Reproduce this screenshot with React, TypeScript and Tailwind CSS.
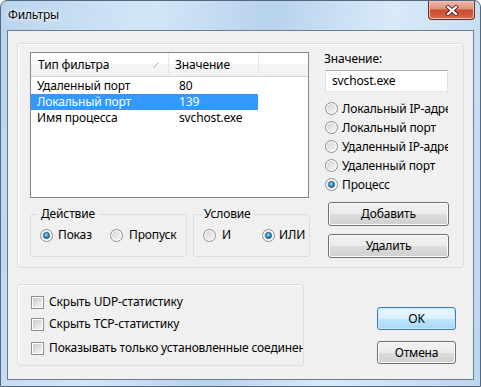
import React from 'react';

const font = { fontFamily: '"Noto Sans", "Open Sans", sans-serif' };

const Radio = ({ checked }: { checked?: boolean }) => (
  <span className="flex h-[13px] w-[13px] shrink-0 items-center justify-center rounded-full border border-[#8e8f8f] bg-[linear-gradient(135deg,#d4d4d4,#f6f6f6)] shadow-[inset_0_0_0_1px_#ffffff]">
    {checked && (
      <span className="h-[7px] w-[7px] rounded-full border border-[#1d5281] bg-[radial-gradient(circle_at_40%_35%,#9fe0ff_0%,#2a8ad0_55%,#0d4a86_100%)]" />
    )}
  </span>
);

const Check = () => (
  <span className="flex h-[13px] w-[13px] shrink-0 items-center justify-center border border-[#8e8f8f] bg-white">
    <span className="h-[9px] w-[9px] bg-[linear-gradient(135deg,#cbcbcb,#f4f4f4)]" />
  </span>
);

const Button = ({ label, primary, className }: { label: string; primary?: boolean; className: string }) => (
  <div
    className={`flex items-center justify-center rounded-[3px] border text-[12px] text-black ${
      primary
        ? 'border-[#3c7fb1] bg-[linear-gradient(#eaf6fd_0%,#d9f0fc_50%,#bee6fd_50%,#a7d9f5_100%)] shadow-[inset_0_0_0_1px_#c6e8fa]'
        : 'border-[#707070] bg-[linear-gradient(#f2f2f2_0%,#ebebeb_50%,#dddddd_50%,#cfcfcf_100%)] shadow-[inset_0_0_0_1px_#fcfcfc]'
    } ${className}`}
  >
    {label}
  </div>
);

const rows = [
  { type: 'Удаленный порт', value: '80' },
  { type: 'Локальный порт', value: '139', selected: true },
  { type: 'Имя процесса', value: 'svchost.exe' },
];

const radios = ['Локальный IP-адрес', 'Локальный порт', 'Удаленный IP-адрес', 'Удаленный порт', 'Процесс'];

export default function App() {
  return (
    <div
      style={font}
      className="flex h-[387px] w-[481px] flex-col overflow-hidden rounded-t-[7px] border border-[#55687d] bg-[linear-gradient(100deg,#b9d4ee_0%,#d3e6f7_28%,#b7d2ed_50%,#d9eaf8_72%,#bcd6ef_100%)] text-[12px] leading-[16px] tracking-[-0.15px] text-black"
    >
      {/* title bar */}
      <div className="flex h-[29px] shrink-0 items-start">
        <div className="ml-[7px] mt-[6px] text-[12px] [text-shadow:0_0_6px_#ffffff,0_0_3px_#ffffff]">Фильтры</div>
        <div className="ml-auto mr-[5px] flex h-[19px] w-[47px] items-center justify-center rounded-b-[4px] border border-t-0 border-[#6b2a20] bg-[linear-gradient(#edb9aa_0%,#e09079_45%,#c94a2c_50%,#d66a4c_100%)] shadow-[inset_0_0_0_1px_#f3c3b5]">
          <svg width="14" height="11" viewBox="0 0 14 11">
            <path d="M3 2 L11 9 M11 2 L3 9" stroke="#5a2a22" strokeWidth="4" strokeLinecap="square" />
            <path d="M3 2 L11 9 M11 2 L3 9" stroke="#ffffff" strokeWidth="2.2" strokeLinecap="square" />
          </svg>
        </div>
      </div>

      {/* client area */}
      <div className="ml-[6px] flex h-[350px] w-[467px] flex-col border border-[#6b7c8f] bg-[#f0f0f0]">
        {/* top panel */}
        <div className="ml-[9px] mt-[12px] flex h-[225px] w-[447px] rounded-[3px] border border-[#d5dfe5] pl-[12px] pt-[8px] shadow-[inset_1px_1px_0_#ffffff]">
          <div className="flex w-[280px] flex-col">
            <div className="h-[146px] w-[279px] border border-[#828790] bg-white">
              <div className="flex h-[24px] border-b border-[#d5d5d5] bg-[linear-gradient(#ffffff_0%,#ffffff_50%,#f4f5f7_50%,#f1f2f4_100%)]">
                <div className="flex w-[138px] items-center border-r border-[#e5e5e5] pl-[7px]">
                  Тип фильтра
                  <svg className="ml-auto mr-[9px]" width="6" height="6" viewBox="0 0 6 6">
                    <path d="M0.5 5.5 L5.5 0.5" stroke="#9ea3ab" strokeWidth="1" />
                  </svg>
                </div>
                <div className="flex w-[90px] items-center border-r border-[#e5e5e5] pl-[6px]">Значение</div>
              </div>
              <div className="pt-[1px]">
                {rows.map((r) => (
                  <div
                    key={r.type}
                    className={`flex h-[16px] w-[227px] items-center ${r.selected ? 'bg-[#3399ff] text-white' : ''}`}
                  >
                    <span className="w-[138px] pl-[6px]">{r.type}</span>
                    <span className="pl-[10px]">{r.value}</span>
                  </div>
                ))}
              </div>
            </div>

            <div className="mt-[8px] flex gap-[6px]">
              <fieldset className="h-[51px] w-[157px] rounded-[3px] border border-[#d5dfe5]">
                <legend className="ml-[7px] px-[3px] leading-[16px]">Действие</legend>
                <div className="flex items-center pl-[9px] pt-[5px]">
                  <div className="flex w-[70px] items-center gap-[5px]">
                    <Radio checked />
                    Показ
                  </div>
                  <div className="flex items-center gap-[6px]">
                    <Radio />
                    Пропуск
                  </div>
                </div>
              </fieldset>
              <fieldset className="h-[51px] w-[117px] rounded-[3px] border border-[#d5dfe5]">
                <legend className="ml-[7px] px-[3px] leading-[16px]">Условие</legend>
                <div className="flex items-center pl-[9px] pt-[5px]">
                  <div className="flex w-[59px] items-center gap-[6px]">
                    <Radio />
                    И
                  </div>
                  <div className="flex items-center gap-[4px]">
                    <Radio checked />
                    ИЛИ
                  </div>
                </div>
              </fieldset>
            </div>
          </div>

          <div className="ml-[14px] flex w-[126px] flex-col">
            <div className="leading-[14px]">Значение:</div>
            <div className="ml-[1px] mt-[4px] flex h-[22px] w-[123px] items-center border border-[#abadb3] border-x-[#dbdfe6] border-b-[#e3e9ef] bg-white pl-[6px]">
              svchost.exe
            </div>
            <div className="mt-[7px] flex flex-col">
              {radios.map((r) => (
                <div key={r} className="ml-[1px] flex h-[19px] w-[123px] items-center gap-[4px] overflow-hidden whitespace-nowrap">
                  <Radio checked={r === 'Процесс'} />
                  {r}
                </div>
              ))}
            </div>
            <Button label="Добавить" className="ml-[4px] mt-[8px] h-[24px] w-[121px]" />
            <Button label="Удалить" className="ml-[4px] mt-[8px] h-[24px] w-[121px]" />
          </div>
        </div>

        {/* bottom row */}
        <div className="mt-[16px] flex">
          <div className="ml-[9px] flex h-[82px] w-[287px] flex-col overflow-hidden rounded-[3px] border border-[#d5dfe5] pl-[13px] pt-[9px] shadow-[inset_1px_1px_0_#ffffff]">
            <div className="flex h-[16px] items-center gap-[5px] whitespace-nowrap">
              <Check />
              Скрыть UDP-статистику
            </div>
            <div className="mt-[6px] flex h-[16px] items-center gap-[5px] whitespace-nowrap">
              <Check />
              Скрыть TCP-статистику
            </div>
            <div className="mt-[8px] flex h-[16px] items-center gap-[5px] whitespace-nowrap">
              <Check />
              Показывать только установленные соединения
            </div>
          </div>
          <div className="ml-[73px] flex flex-col">
            <Button label="OK" primary className="mt-[23px] h-[23px] w-[79px]" />
            <Button label="Отмена" className="mt-[11px] h-[23px] w-[79px]" />
          </div>
        </div>
      </div>
    </div>
  );
}
